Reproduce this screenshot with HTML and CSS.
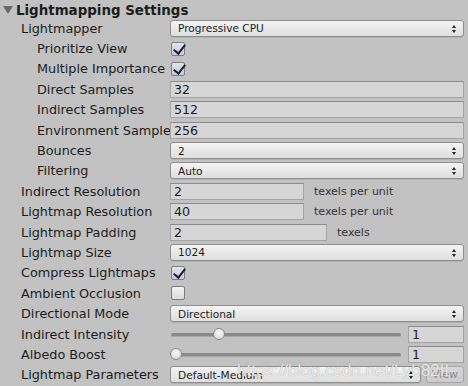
FILE: index.html
```html
<!DOCTYPE html>
<html lang="en">
<head>
    <meta charset="UTF-8">
    <title>Lightmapping Settings</title>
    <link rel="stylesheet" href="styles.css">
</head>
<body>
    <div class="panel">
        <div class="header">
            <span class="fold"></span>
            Lightmapping Settings
        </div>

        <div class="row">
            <div class="label">Lightmapper</div>
            <div class="popup">Progressive CPU<span class="arrows"></span></div>
        </div>
        <div class="row sub">
            <div class="label">Prioritize View</div>
            <div class="check on"></div>
        </div>
        <div class="row sub">
            <div class="label">Multiple Importance Sampling</div>
            <div class="check on"></div>
        </div>
        <div class="row sub">
            <div class="label">Direct Samples</div>
            <div class="field">32</div>
        </div>
        <div class="row sub">
            <div class="label">Indirect Samples</div>
            <div class="field">512</div>
        </div>
        <div class="row sub">
            <div class="label">Environment Samples</div>
            <div class="field">256</div>
        </div>
        <div class="row sub">
            <div class="label">Bounces</div>
            <div class="popup">2<span class="arrows"></span></div>
        </div>
        <div class="row sub">
            <div class="label">Filtering</div>
            <div class="popup">Auto<span class="arrows"></span></div>
        </div>
        <div class="row">
            <div class="label">Indirect Resolution</div>
            <div class="field short">2</div>
            <div class="unit">texels per unit</div>
        </div>
        <div class="row">
            <div class="label">Lightmap Resolution</div>
            <div class="field short">40</div>
            <div class="unit">texels per unit</div>
        </div>
        <div class="row">
            <div class="label">Lightmap Padding</div>
            <div class="field medium">2</div>
            <div class="unit">texels</div>
        </div>
        <div class="row">
            <div class="label">Lightmap Size</div>
            <div class="popup">1024<span class="arrows"></span></div>
        </div>
        <div class="row">
            <div class="label">Compress Lightmaps</div>
            <div class="check on"></div>
        </div>
        <div class="row">
            <div class="label">Ambient Occlusion</div>
            <div class="check"></div>
        </div>
        <div class="row">
            <div class="label">Directional Mode</div>
            <div class="popup">Directional<span class="arrows"></span></div>
        </div>
        <div class="row">
            <div class="label">Indirect Intensity</div>
            <div class="slider">
                <div class="track"></div>
                <div class="knob" style="left: 18.5%"></div>
            </div>
            <div class="field number">1</div>
        </div>
        <div class="row">
            <div class="label">Albedo Boost</div>
            <div class="slider">
                <div class="track"></div>
                <div class="knob" style="left: 0%"></div>
            </div>
            <div class="field number">1</div>
        </div>
        <div class="row">
            <div class="label">Lightmap Parameters</div>
            <div class="popup">Default-Medium<span class="arrows"></span></div>
            <div class="button off">View</div>
        </div>

        <div class="watermark">https://blog.csdn.net/Lyb82II</div>
    </div>
</body>
</html>
```

FILE: styles.css
```css
* {
    margin: 0;
    padding: 0;
    box-sizing: border-box;
}

body {
    background-color: #c2c2c2;
    font-family: 'DejaVu Sans', Verdana, sans-serif;
    color: #1c1c1c;
    width: 468px;
    height: 386px;
    overflow: hidden;
}

.panel {
    position: relative;
    display: flex;
    flex-direction: column;
    padding-right: 4px;
}

/* Foldout header */
.header {
    height: 18px;
    display: flex;
    align-items: center;
    font-size: 13.4px;
    font-weight: bold;
    padding-left: 3px;
    padding-top: 2px;
}

.fold {
    width: 0;
    height: 0;
    border-left: 5px solid transparent;
    border-right: 5px solid transparent;
    border-top: 8px solid #6a6a6a;
    margin-right: 3px;
}

/* Property rows */
.row {
    height: 20.4px;
    display: flex;
    align-items: center;
    font-size: 12.8px;
}

.label {
    width: 170px;
    flex-shrink: 0;
    padding-left: 21px;
    white-space: nowrap;
    overflow: hidden;
}

.sub .label {
    padding-left: 37px;
}

/* Popup / dropdown */
.popup {
    flex: 1;
    height: 17px;
    position: relative;
    display: flex;
    align-items: center;
    padding-left: 7px;
    font-size: 10.6px;
    border: 1px solid #8f8f8f;
    border-radius: 3px;
    background: linear-gradient(#f4f4f4, #dedede);
    box-shadow: 0 1px 0 rgba(0, 0, 0, 0.08);
}

.arrows {
    position: absolute;
    right: 6px;
    top: 4px;
    width: 5px;
    height: 8px;
}

.arrows::before,
.arrows::after {
    content: '';
    position: absolute;
    left: 0;
    border-left: 2.5px solid transparent;
    border-right: 2.5px solid transparent;
}

.arrows::before {
    top: 0;
    border-bottom: 3px solid #222;
}

.arrows::after {
    bottom: 0;
    border-top: 3px solid #222;
}

/* Text fields */
.field {
    flex: 1;
    height: 17px;
    display: flex;
    align-items: center;
    padding-left: 3px;
    font-size: 12.6px;
    background-color: #d6d6d6;
    border: 1px solid #a4a4a4;
    border-top-color: #8c8c8c;
}

.field.short {
    flex: none;
    width: 134px;
}

.field.medium {
    flex: none;
    width: 157px;
}

.field.number {
    flex: none;
    width: 56px;
    margin-left: 6px;
}

.unit {
    font-size: 11px;
    color: #333;
    margin-left: 10px;
    white-space: nowrap;
}

/* Checkboxes */
.check {
    width: 14px;
    height: 14px;
    margin-left: 1px;
    border: 1px solid #7d7d7d;
    border-radius: 2px;
    background: linear-gradient(#f2f2f2, #dcdcdc);
    position: relative;
}

.check.on {
    background: linear-gradient(#dfe3ea, #c5cad4);
}

.check.on::after {
    content: '';
    position: absolute;
    left: 4px;
    top: -1px;
    width: 5px;
    height: 10px;
    border-right: 2.5px solid #14203a;
    border-bottom: 2.5px solid #14203a;
    transform: rotate(38deg);
}

/* Sliders */
.slider {
    flex: 1;
    height: 17px;
    position: relative;
}

.track {
    position: absolute;
    left: 1px;
    right: 1px;
    top: 7px;
    height: 4px;
    border-radius: 2px;
    background-color: #8a8a8a;
    border-bottom: 1px solid #a8a8a8;
}

.knob {
    position: absolute;
    top: 2px;
    width: 12px;
    height: 12px;
    border-radius: 50%;
    border: 1px solid #8a8a8a;
    background: radial-gradient(circle at 50% 35%, #fafafa, #d2d2d2);
}

/* Small button */
.button {
    width: 38px;
    height: 17px;
    margin-left: 5px;
    display: flex;
    align-items: center;
    justify-content: center;
    font-size: 11px;
    border: 1px solid #a8a8a8;
    border-radius: 3px;
    background: linear-gradient(#d8d8d8, #cbcbcb);
}

.button.off {
    color: #8c8c8c;
}

.watermark {
    position: absolute;
    left: 237px;
    top: 361px;
    font-family: 'Liberation Sans', Arial, sans-serif;
    font-size: 17px;
    color: rgba(255, 255, 255, 0.8);
    text-shadow: 0 0 1px rgba(110, 110, 110, 0.7);
    pointer-events: none;
    white-space: nowrap;
}
```
